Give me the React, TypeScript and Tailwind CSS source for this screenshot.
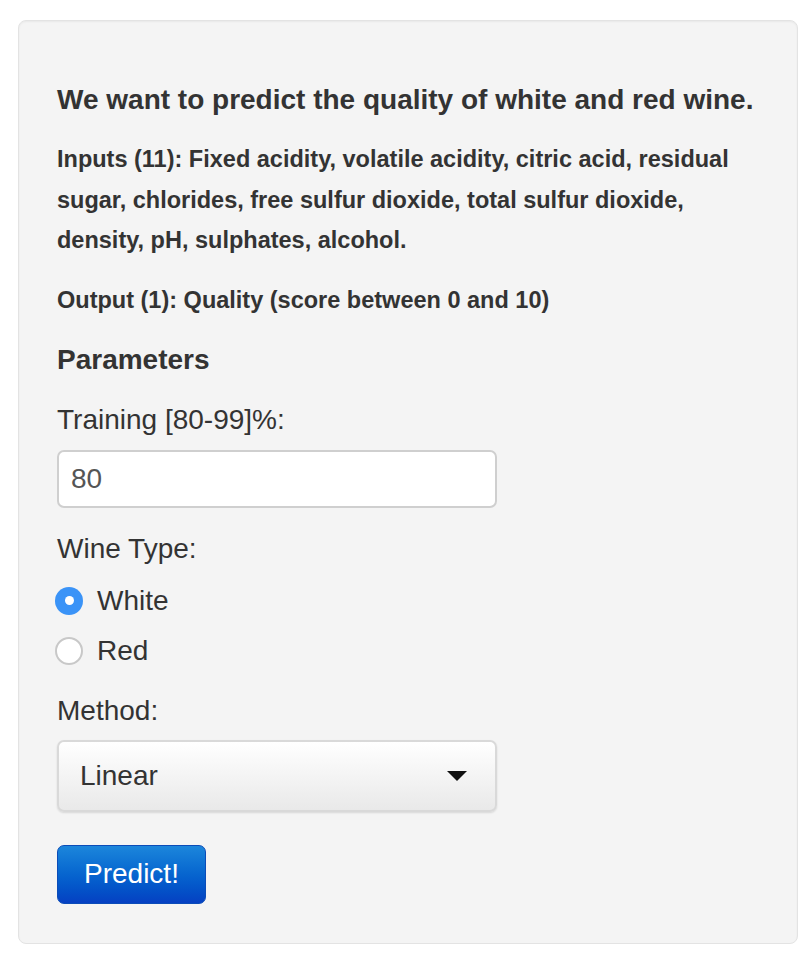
import { useState } from "react";

const FONT = { fontFamily: '"Liberation Sans", Arial, Helvetica, sans-serif' };

export default function App() {
  const [training, setTraining] = useState("80");
  const [wine, setWine] = useState<"white" | "red">("white");
  const [method, setMethod] = useState("Linear");

  return (
    <div className="min-h-[972px] bg-white pl-[18px] pt-[20px] text-[#333]" style={FONT}>
      <div className="w-[780px] rounded-[8px] border border-[#e3e3e3] bg-[#f4f4f4] pb-[39px] pl-[38px] pr-[38px] pt-[59px] shadow-[inset_0_1px_2px_rgba(0,0,0,0.05)]">
        {/* intro */}
        <h4 className="text-[28px] font-bold leading-[40px]">
          We want to predict the quality of white and red wine.
        </h4>
        <p className="mt-[19px] w-[700px] text-[23.5px] font-bold leading-[40.5px]">
          Inputs (11): Fixed acidity, volatile acidity, citric acid, residual sugar, chlorides, free
          sulfur dioxide, total sulfur dioxide, density, pH, sulphates, alcohol.
        </p>
        <p className="mt-[19px] text-[23.5px] font-bold leading-[40px]">
          Output (1): Quality (score between 0 and 10)
        </p>

        {/* parameters */}
        <h4 className="mt-[20px] text-[28px] font-bold leading-[40px]">Parameters</h4>

        <label className="mt-[20px] block text-[28px] leading-[40px]">Training [80-99]%:</label>
        <input
          value={training}
          onChange={(e) => setTraining(e.target.value)}
          className="mt-[10px] block h-[58px] w-[440px] rounded-[7px] border-2 border-[#cfcfcf] bg-white px-[12px] text-[28px] text-[#555] outline-none"
          style={FONT}
        />

        <div className="mt-[21px] text-[28px] leading-[40px]">Wine Type:</div>
        <div className="mt-[12px] flex flex-col gap-[10px]">
          <Radio label="White" checked={wine === "white"} onClick={() => setWine("white")} />
          <Radio label="Red" checked={wine === "red"} onClick={() => setWine("red")} />
        </div>

        <div className="mt-[20px] text-[28px] leading-[40px]">Method:</div>
        <div className="relative mt-[9px] w-[440px]">
          <select
            value={method}
            onChange={(e) => setMethod(e.target.value)}
            className="block h-[72px] w-full appearance-none rounded-[7px] border-2 border-[#d9d9d9] bg-gradient-to-b from-white to-[#e9e9e9] pl-[21px] text-[28px] text-[#333] shadow-[0_1px_2px_rgba(0,0,0,0.12)] outline-none"
            style={FONT}
          >
            <option>Linear</option>
            <option>Random Forest</option>
          </select>
          <svg
            className="pointer-events-none absolute right-[30px] top-[31px]"
            width="20"
            height="10"
            viewBox="0 0 20 10"
          >
            <path d="M0 0 L20 0 L10 10 Z" fill="#111" />
          </svg>
        </div>

        <button
          className="mt-[33px] block h-[59px] rounded-[7px] border border-[#0b4cb8] bg-gradient-to-b from-[#1c86db] to-[#0640c2] px-[26px] text-[28px] text-white"
          style={FONT}
        >
          Predict!
        </button>
      </div>
    </div>
  );
}

function Radio(props: { label: string; checked: boolean; onClick: () => void }) {
  const { label, checked, onClick } = props;
  return (
    <div className="-ml-[2px] flex h-[40px] cursor-pointer items-center" onClick={onClick}>
      <span
        className={
          checked
            ? "flex h-[28px] w-[28px] items-center justify-center rounded-full bg-[#3a93f7]"
            : "flex h-[28px] w-[28px] items-center justify-center rounded-full border-2 border-[#c8c8c8] bg-white"
        }
      >
        {checked && <span className="h-[9px] w-[9px] rounded-full bg-white" />}
      </span>
      <span className="ml-[14px] text-[28px] leading-[40px]">{label}</span>
    </div>
  );
}
